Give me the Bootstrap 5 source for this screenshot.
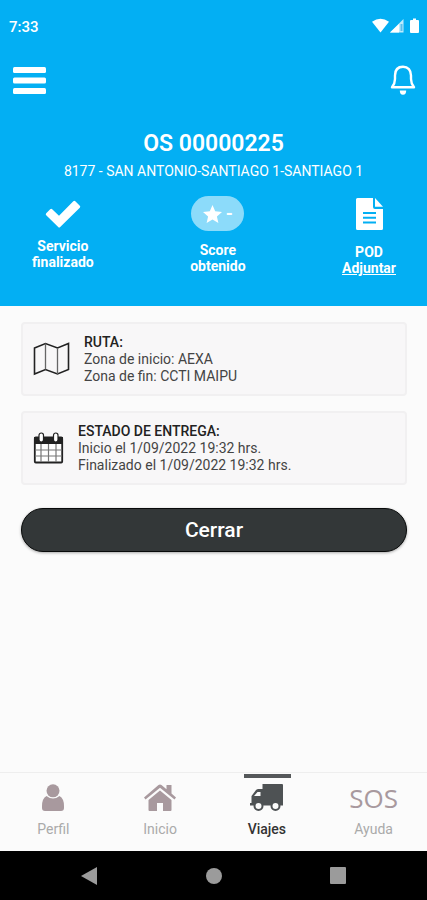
<!DOCTYPE html>
<html lang="es">
<head>
<meta charset="utf-8">
<meta name="viewport" content="width=device-width, initial-scale=1">
<title>OS 00000225</title>
<link href="https://cdn.jsdelivr.net/npm/bootstrap@5.3.0/dist/css/bootstrap.min.css" rel="stylesheet">
<style>
body { font-family: Roboto, sans-serif; font-size: 14px; line-height: 17px; background: #fbfbfb; color: #444; }
svg { display: block; }
.hero { background: #03aff3; color: #fff; padding-bottom: 30px; }
.status-bar { padding: 17px 7px 0 9px; height: 44px; font-size: 15px; line-height: 20px; font-weight: 500; }
.app-bar { padding: 20px 11px 0 13px; height: 85px; }
.order-title { font-size: 23px; line-height: 30px; font-weight: 600; }
.order-route { line-height: 20px; margin-top: 2px; }
.stats { padding: 15px 31px 0 32px; font-weight: 700; line-height: 16px; }
.stat-icon { height: 36px; margin-bottom: 6px; }
.stat-icon.tall { margin-bottom: 10px; }
.stat-icon.taller { margin-bottom: 12px; }
.score-pill { background: #8cdbfa; width: 53px; height: 35px; font-size: 18px; }
.content { padding: 16px 20px 16px 21px; }
.info-card { background: #f8f7f8; border: 2px solid #f1f0f1; border-radius: 4px; min-height: 74px; padding: 0 10px; gap: 14px; margin-bottom: 15px; }
.info-card strong { color: #222; font-weight: 500; }
.btn-close-trip { --bs-btn-bg: #333738; --bs-btn-color: #fff; --bs-btn-hover-bg: #222; --bs-btn-hover-color: #fff; border: 1px solid #080a0a; font-size: 21px; line-height: 30px; font-weight: 500; padding: 6px; margin-top: 8px; box-shadow: 0 1px 3px #0005; }
.tabs { border-top: 1px solid #eee; }
.tab { color: #aaa; border-top: 4px solid transparent; padding-bottom: 13px; text-decoration: none; }
.tab-art { color: #a8999e; height: 44px; padding-top: 7px; }
.tab.current { color: #333; font-weight: 500; }
.tab.current .tab-art { color: #4e5254; position: relative; }
.tab.current .tab-art::before { content: ""; position: absolute; top: -3px; left: 50%; width: 47px; height: 4px; margin-left: -23px; background: #55585a; }
.tab-art.sos { font: 26px/28px "Open Sans", sans-serif; }
.system-bar { background: #000; height: 49px; color: #9b9b9b; padding: 0 81px; }
</style>
<script defer src="https://cdn.jsdelivr.net/npm/bootstrap@5.3.0/dist/js/bootstrap.bundle.min.js"></script>
</head>
<body class="d-flex flex-column min-vh-100">
<header class="hero">
  <div class="status-bar d-flex justify-content-between">
    <span>7:33</span>
    <svg width="48" height="16" viewBox="0 0 48 16" fill="currentColor" aria-hidden="true">
      <path d="M0 4.800Q8.500-1.500 17 4.800L8.500 15.500Z"/>
      <path d="M31.500 2V15.500H18Z" opacity=".75"/><path d="M27 7V15.500H18Z"/>
      <path d="M28.500 7H30.500V14H28.500Z" fill="#58bfee"/>
      <path d="M41 1.500h3V3h2q1 0 1 1v11q0 1-1 1h-7q-1 0-1-1V4q0-1 1-1h2z"/>
    </svg>
  </div>
  <div class="app-bar d-flex justify-content-between align-items-start">
    <button class="btn p-0 border-0 text-white" type="button" aria-label="Menú">
      <svg width="33" height="32" viewBox="0 0 33 32" fill="currentColor"><rect y="3" width="33" height="6" rx="1.500"/><rect y="13.500" width="33" height="6" rx="1.500"/><rect y="24" width="33" height="6" rx="1.500"/></svg>
    </button>
    <button class="btn p-0 border-0 text-white" type="button" aria-label="Notificaciones">
      <svg width="26" height="32" viewBox="0 0 26 32" fill="none" stroke="currentColor" stroke-width="2.400" stroke-linejoin="round"><path d="M13 2.800C8 2.800 5 6 5 11.500V15Q5 19.500 2 23.300H24Q21 19.500 21 15V11.500C21 6 18 2.800 13 2.800Z"/><path d="M9.800 26.500h6.400a3.200 4.200 0 0 1-6.400 0z" fill="currentColor" stroke="none"/></svg>
    </button>
  </div>
  <div class="text-center">
    <h1 class="order-title m-0">OS 00000225</h1>
    <p class="order-route mb-0">8177 - SAN ANTONIO-SANTIAGO 1-SANTIAGO 1</p>
  </div>
  <div class="stats d-flex justify-content-between text-center">
    <div>
      <div class="stat-icon d-flex align-items-center justify-content-center">
        <svg width="36" height="28" viewBox="0 0 36 28" fill="currentColor"><path d="M1.200 13.200L5.200 9.200Q6.200 8.200 7.200 9.200L14 15.800L28.300 1.300Q29.300.300 30.300 1.300L34.800 5.800Q35.800 6.800 34.800 7.800L15.200 27Q14.200 28 13.200 27L1.200 15.200Q.2 14.200 1.200 13.200Z"/></svg>
      </div>
      Servicio<br>finalizado
    </div>
    <div>
      <div class="stat-icon tall d-flex justify-content-center">
        <span class="score-pill rounded-pill d-flex align-items-center justify-content-center gap-1">
          <svg width="19" height="18" viewBox="0 0 19 18" fill="currentColor" aria-hidden="true"><path d="M9.500 0L12.200 6.300L19 6.900L13.900 11.400L15.400 18L9.500 14.500L3.600 18L5.100 11.400L0 6.900L6.800 6.300Z"/></svg>-
        </span>
      </div>
      Score<br>obtenido
    </div>
    <div>
      <div class="stat-icon taller d-flex align-items-center justify-content-center">
        <svg width="27" height="32" viewBox="0 0 27 32" fill="currentColor"><path d="M1.500 0H17V9Q17 11 19 11H27V30.500Q27 32 25.500 32H1.500Q0 32 0 30.500V1.500Q0 0 1.500 0Z"/><path d="M19 0L27 8.800H19Z"/><path d="M7 15H20M7 19.800H20M7 24.500H20" stroke="#03aff3" stroke-width="2"/></svg>
      </div>
      POD<br><a class="text-white" href="#">Adjuntar</a>
    </div>
  </div>
</header>
<main class="content flex-grow-1">
  <section class="info-card d-flex align-items-center">
    <svg width="37" height="34" viewBox="0 0 37 34" fill="none" stroke="#222" stroke-width="1.600" aria-hidden="true"><path d="M1.500 6L12.500 1.500L24.500 6L35.500 1.500V27.500L24.500 32L12.500 27.500L1.500 32Z"/><path d="M12.500 1.500V27.500M24.500 6V32" stroke="#666" stroke-width="1.300"/></svg>
    <div><strong>RUTA:</strong><br>Zona de inicio: AEXA<br>Zona de fin: CCTI MAIPU</div>
  </section>
  <section class="info-card d-flex align-items-center">
    <svg width="31" height="32" viewBox="0 0 31 32" aria-hidden="true"><rect x="1.800" y="5.500" width="27.400" height="25" rx="1" fill="#fff" stroke="#222" stroke-width="1.800"/><path d="M1 5H30V12H1Z" fill="#222"/><path d="M8 12V30M15.500 12V30M23 12V30M2 18H29M2 24H29" stroke="#777" stroke-width="1.200"/><rect x="6" y="1" width="4.500" height="9" rx="2.200" fill="#fff" stroke="#222" stroke-width="1.200"/><rect x="20.500" y="1" width="4.500" height="9" rx="2.200" fill="#fff" stroke="#222" stroke-width="1.200"/></svg>
    <div><strong>ESTADO DE ENTREGA:</strong><br>Inicio el 1/09/2022 19:32 hrs.<br>Finalizado el 1/09/2022 19:32 hrs.</div>
  </section>
  <button class="btn btn-close-trip rounded-pill w-100" type="button">Cerrar</button>
</main>
<nav class="tabs d-flex text-center" aria-label="Principal">
  <a class="tab col-3" href="#"><span class="tab-art d-flex justify-content-center">
    <svg width="22" height="27" viewBox="0 0 22 27" fill="currentColor"><circle cx="11" cy="6.800" r="6.500"/><path d="M4.500 12Q11 17 17.500 12Q22 14.500 22 22V24Q22 27 19 27H3Q0 27 0 24V22Q0 14.500 4.500 12Z"/></svg></span>Perfil</a>
  <a class="tab col-3" href="#"><span class="tab-art d-flex justify-content-center">
    <svg width="32" height="27" viewBox="0 0 32 27" fill="currentColor"><path d="M16 6.500L27.500 16V26Q27.500 27 26.500 27H19V19H13V27H5.500Q4.500 27 4.500 26V16Z"/><path d="M0 13.500L14.500 1Q16 0 17.500 1L22.500 5.200V1H27.500V9.500L32 13.500L30.500 15.500L16 3.800L1.500 15.500Z"/></svg></span>Inicio</a>
  <a class="tab current col-3" href="#" aria-current="page"><span class="tab-art d-flex justify-content-center">
    <svg width="33" height="27" viewBox="0 0 33 27"><path d="M12.500 0H32Q33 0 33 1V21.500H0V19H1.500V12L6 6Q7 5 8.500 5H12.500Z" fill="currentColor"/><path d="M4 12L7.500 8H10.500V12Z" fill="#fbfbfb"/><g fill="#fbfbfb" stroke="currentColor" stroke-width="2"><circle cx="8.500" cy="22" r="4"/><circle cx="25.500" cy="22" r="4"/></g></svg></span>Viajes</a>
  <a class="tab col-3" href="#"><span class="tab-art sos d-flex justify-content-center">SOS</span>Ayuda</a>
</nav>
<div class="system-bar d-flex justify-content-between align-items-center">
  <svg width="16" height="18" viewBox="0 0 16 18" fill="currentColor"><path d="M16 0V18L0 9Z"/></svg>
  <svg width="16" height="16" viewBox="0 0 16 16" fill="currentColor"><circle cx="8" cy="8" r="8"/></svg>
  <svg width="16" height="17" viewBox="0 0 16 17" fill="currentColor"><rect width="16" height="17" rx="1"/></svg>
</div>
</body>
</html>
